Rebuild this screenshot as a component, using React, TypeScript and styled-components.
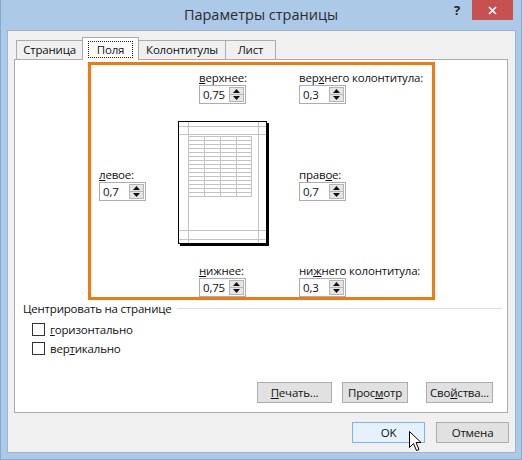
import React from "react";
import styled, { createGlobalStyle } from "styled-components";

const GlobalStyle = createGlobalStyle`
  html, body {
    margin: 0;
    padding: 0;
    background: #c6d8ee;
  }
  body {
    font-family: "Open Sans", "Noto Sans", sans-serif;
    font-size: 11.5px;
    letter-spacing: -0.2px;
    color: #111;
  }
`;

const Window = styled.div`
  width: 522px;
  height: 460px;
  box-sizing: border-box;
  background: #adc9e8;
  border: 1px solid #87a8d2;
  border-top: none;
  display: flex;
  flex-direction: column;
`;

const TitleBar = styled.div`
  height: 30px;
  display: grid;
  grid-template-columns: 1fr auto 1fr;
  align-items: start;
`;

const Title = styled.div`
  grid-column: 2;
  font-size: 14.5px;
  letter-spacing: 0;
  line-height: 30px;
  color: #2b2b2b;
`;

const TitleControls = styled.div`
  grid-column: 3;
  justify-self: end;
  display: flex;
  align-items: flex-start;
  margin-right: 8px;
`;

const HelpMark = styled.span`
  font-weight: 700;
  font-size: 13px;
  line-height: 20px;
  color: #222;
  margin-right: 12px;
`;

const CloseButton = styled.div`
  width: 41px;
  height: 20px;
  background: #c75050;
  display: flex;
  align-items: center;
  justify-content: center;
`;

const Client = styled.div`
  flex: 1;
  margin: 0 5px 6px 6px;
  border: 1px solid #9fb3cb;
  background: #f0f0f0;
  display: flex;
  flex-direction: column;
`;

const TabStrip = styled.div`
  display: flex;
  align-items: flex-end;
  height: 23px;
  margin: 6px 0 -1px 8px;
  position: relative;
  z-index: 1;
`;

const Tab = styled.div<{ $w: number; $active?: boolean }>`
  width: ${(p) => p.$w}px;
  height: ${(p) => (p.$active ? 23 : 20)}px;
  box-sizing: border-box;
  border: 1px solid #acacac;
  border-bottom: ${(p) => (p.$active ? "none" : "1px solid #acacac")};
  background: ${(p) => (p.$active ? "#fff" : "#f0f0f0")};
  margin-left: -1px;
  display: flex;
  align-items: ${(p) => (p.$active ? "flex-start" : "center")};
  justify-content: center;
  line-height: 16px;
  padding-top: ${(p) => (p.$active ? 4 : 0)}px;
  &:first-child {
    margin-left: 0;
  }
`;

const FocusLabel = styled.span`
  outline: 1px dotted #222;
  padding: 0 8px;
  line-height: 15px;
`;

const Panel = styled.div`
  height: 354px;
  box-sizing: border-box;
  margin: 0 7px 0 6px;
  border: 1px solid #acacac;
  background: #fff;
  display: flex;
  flex-direction: column;
`;

const MarginsBox = styled.div`
  margin: 2px 0 0 73px;
  width: 347px;
  height: 238px;
  box-sizing: border-box;
  border: 3px solid #ee7a12;
  padding: 5px 0 0 8px;
  display: grid;
  grid-template-columns: 78px 122px 1fr;
  grid-template-rows: auto 1fr auto;
`;

const Field = styled.div<{ $col: number; $row?: number; $indent?: number; $center?: boolean }>`
  grid-column: ${(p) => p.$col};
  grid-row: ${(p) => p.$row ?? "auto"};
  padding-left: ${(p) => p.$indent ?? 0}px;
  align-self: ${(p) => (p.$center ? "center" : "start")};
  display: flex;
  flex-direction: column;
`;

const FieldLabel = styled.div`
  line-height: 15px;
  white-space: nowrap;
`;

const Spin = styled.div`
  width: 47px;
  height: 19px;
  box-sizing: border-box;
  border: 1px solid #abadb3;
  background: #fff;
  display: flex;
`;

const SpinValue = styled.span`
  flex: 1;
  padding-left: 3px;
  line-height: 17px;
`;

const SpinButtons = styled.div`
  width: 15px;
  margin: 1px 1px 1px 0;
  box-sizing: border-box;
  border: 1px solid #b5b5b5;
  background: #e6e6e6;
  display: flex;
  flex-direction: column;
`;

const SpinArrow = styled.div`
  flex: 1;
  display: flex;
  align-items: center;
  justify-content: center;
  & + & {
    border-top: 1px solid #b5b5b5;
  }
`;

const Preview = styled.svg`
  grid-column: 2;
  grid-row: 2;
  margin: 16px 0 16px 0;
  display: block;
`;

const GroupHead = styled.div`
  display: flex;
  align-items: center;
  margin: 1px 5px 0 8px;
  line-height: 15px;
`;

const GroupLine = styled.div`
  flex: 1;
  height: 1px;
  background: #dcdcdc;
  margin-left: 5px;
`;

const CheckList = styled.div`
  margin-top: 4px;
  padding-left: 17px;
  display: flex;
  flex-direction: column;
`;

const CheckRow = styled.label`
  height: 19px;
  display: flex;
  align-items: center;
  gap: 5px;
`;

const CheckBox = styled.span`
  width: 13px;
  height: 13px;
  box-sizing: border-box;
  border: 1px solid #333;
  background: #fff;
`;

const ButtonRow = styled.div`
  margin-top: auto;
  margin-bottom: 9px;
  padding-right: 14px;
  display: flex;
  justify-content: flex-end;
`;

const Button = styled.div<{ $w: number; $gap?: number; $primary?: boolean }>`
  width: ${(p) => p.$w}px;
  height: 21px;
  box-sizing: border-box;
  margin-left: ${(p) => p.$gap ?? 0}px;
  border: 1px solid ${(p) => (p.$primary ? "#7eb4ea" : "#adadad")};
  background: ${(p) => (p.$primary ? "#e5f1fb" : "#e1e1e1")};
  display: flex;
  align-items: center;
  justify-content: center;
  line-height: 15px;
  position: relative;
`;

const Footer = styled.div`
  margin-top: 9px;
  padding-right: 6px;
  display: flex;
  justify-content: flex-end;
`;

const Cursor = styled.svg`
  position: absolute;
  left: 56px;
  top: 8px;
`;

const Arrow = ({ up }: { up?: boolean }) => (
  <svg width="7" height="4" viewBox="0 0 7 4">
    <path d={up ? "M3.5 0 L7 4 L0 4 Z" : "M0 0 L7 0 L3.5 4 Z"} fill="#111" />
  </svg>
);

const Spinner = ({ value }: { value: string }) => (
  <Spin>
    <SpinValue>{value}</SpinValue>
    <SpinButtons>
      <SpinArrow>
        <Arrow up />
      </SpinArrow>
      <SpinArrow>
        <Arrow />
      </SpinArrow>
    </SpinButtons>
  </Spin>
);

const PagePreview = () => {
  const cols = [11.5, 27.5, 43.5, 59.5, 74.5];
  const rows = Array.from({ length: 16 }, (_, i) => 16.5 + i * 4);
  return (
    <Preview width="93" height="127" viewBox="0 0 93 127">
      <rect x="3" y="3" width="89" height="123" fill="#000" />
      <rect x="1.5" y="1.5" width="88" height="122" fill="#fff" stroke="#000" />
      <g stroke="#c3c3c3" strokeWidth="1" shapeRendering="crispEdges">
        <line x1="11.5" y1="2" x2="11.5" y2="123" />
        <line x1="81" y1="2" x2="81" y2="123" />
        <line x1="2" y1="6.5" x2="89" y2="6.5" />
        <line x1="2" y1="14.5" x2="89" y2="14.5" />
        <line x1="2" y1="110.5" x2="89" y2="110.5" />
        <line x1="2" y1="119.5" x2="89" y2="119.5" />
        {cols.map((x) => (
          <line key={x} x1={x} y1="16.5" x2={x} y2="76.5" />
        ))}
        {rows.map((y) => (
          <line key={y} x1="11.5" y1={y} x2="74.5" y2={y} />
        ))}
      </g>
    </Preview>
  );
};

export default function App() {
  return (
    <>
      <GlobalStyle />
      <Window>
        <TitleBar>
          <Title>Параметры страницы</Title>
          <TitleControls>
            <HelpMark>?</HelpMark>
            <CloseButton>
              <svg width="9" height="9" viewBox="0 0 9 9">
                <path d="M1 1 L8 8 M8 1 L1 8" stroke="#fff" strokeWidth="1.6" />
              </svg>
            </CloseButton>
          </TitleControls>
        </TitleBar>
        <Client>
          <TabStrip>
            <Tab $w={67}>Страница</Tab>
            <Tab $w={57} $active>
              <FocusLabel>Поля</FocusLabel>
            </Tab>
            <Tab $w={88}>Колонтитулы</Tab>
            <Tab $w={51}>Лист</Tab>
          </TabStrip>
          <Panel>
            <MarginsBox>
              <Field $col={2} $indent={22}>
                <FieldLabel>
                  <u>в</u>ерхнее:
                </FieldLabel>
                <Spinner value="0,75" />
              </Field>
              <Field $col={3}>
                <FieldLabel>
                  вер<u>х</u>него колонтитула:
                </FieldLabel>
                <Spinner value="0,3" />
              </Field>
              <Field $col={1} $row={2} $center>
                <FieldLabel>
                  <u>л</u>евое:
                </FieldLabel>
                <Spinner value="0,7" />
              </Field>
              <PagePreview />
              <Field $col={3} $row={2} $center>
                <FieldLabel>
                  прав<u>о</u>е:
                </FieldLabel>
                <Spinner value="0,7" />
              </Field>
              <Field $col={2} $row={3} $indent={22}>
                <FieldLabel>
                  <u>н</u>ижнее:
                </FieldLabel>
                <Spinner value="0,75" />
              </Field>
              <Field $col={3} $row={3}>
                <FieldLabel>
                  ни<u>ж</u>него колонтитула:
                </FieldLabel>
                <Spinner value="0,3" />
              </Field>
            </MarginsBox>
            <GroupHead>
              Центрировать на странице
              <GroupLine />
            </GroupHead>
            <CheckList>
              <CheckRow>
                <CheckBox />
                <span>
                  <u>г</u>оризонтально
                </span>
              </CheckRow>
              <CheckRow>
                <CheckBox />
                <span>
                  вер<u>т</u>икально
                </span>
              </CheckRow>
            </CheckList>
            <ButtonRow>
              <Button $w={75}>
                <span>
                  <u>П</u>ечать...
                </span>
              </Button>
              <Button $w={66} $gap={10}>
                <span>
                  Прос<u>м</u>отр
                </span>
              </Button>
              <Button $w={67} $gap={18}>
                <span>
                  Сво<u>й</u>ства...
                </span>
              </Button>
            </ButtonRow>
          </Panel>
          <Footer>
            <Button $w={73} $primary>
              OK
              <Cursor width="14" height="21" viewBox="0 0 14 21">
                <path
                  d="M0.5 0.5 L0.5 16.5 L4.5 12.5 L7.5 19.5 L10 18.5 L7 11.5 L12 11.5 Z"
                  fill="#fff"
                  stroke="#000"
                  strokeWidth="1"
                  strokeLinejoin="miter"
                />
              </Cursor>
            </Button>
            <Button $w={73} $gap={11}>
              Отмена
            </Button>
          </Footer>
        </Client>
      </Window>
    </>
  );
}
